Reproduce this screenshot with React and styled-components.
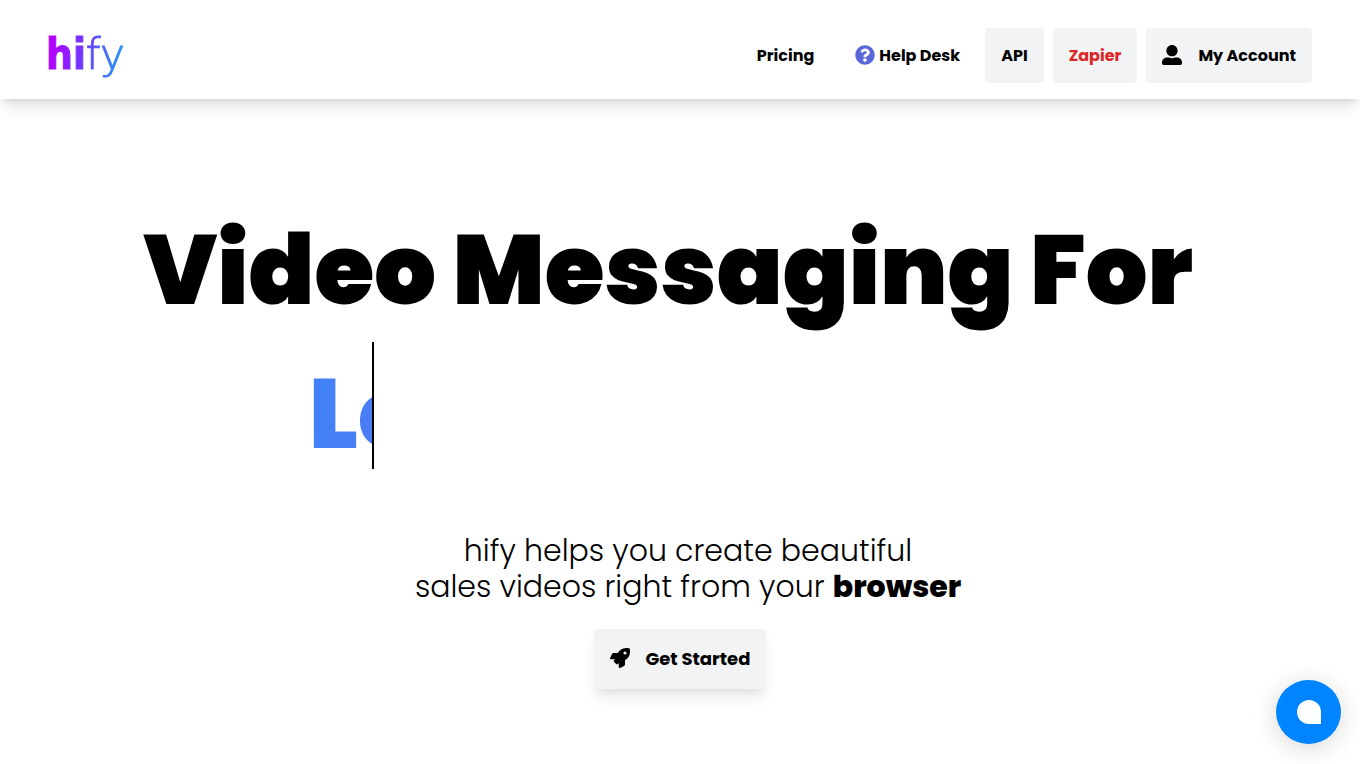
import React from "react";
import styled, { createGlobalStyle } from "styled-components";
import { FaQuestionCircle, FaUserAlt, FaRocket } from "react-icons/fa";

const GlobalStyle = createGlobalStyle`
  *, *::before, *::after { box-sizing: border-box; }
  body {
    margin: 0;
    background: #fff;
    color: #000;
    font-family: Poppins, Inter, "Liberation Sans", sans-serif;
  }
`;

const Header = styled.header`
  display: flex;
  align-items: center;
  justify-content: space-between;
  padding: 28px 48px 16px 46px;
  background: #fff;
  box-shadow: 0 10px 16px -3px rgba(0, 0, 0, 0.1), 0 4px 8px -2px rgba(0, 0, 0, 0.1);
`;

const Logo = styled.a`
  margin-bottom: 2px;
  font-family: "DejaVu Sans", sans-serif;
  font-size: 42px;
  line-height: 48px;
  font-weight: 200;
  text-decoration: none;
  color: transparent;
  -webkit-text-stroke: 1px transparent;
  background: linear-gradient(100deg, #b300ff 10%, #6a3cff 50%, #1e9bf0 95%);
  background-clip: text;
  -webkit-background-clip: text;

  b {
    font-family: "DejaVu Sans Condensed", "DejaVu Sans", sans-serif;
    font-weight: 700;
  }
`;

const Nav = styled.nav`
  display: flex;
  align-items: center;
  gap: 9px;
`;

const NavLink = styled.a`
  display: flex;
  align-items: center;
  gap: ${(p) => p.$gap || 4}px;
  padding: 16px;
  border-radius: 4px;
  font-size: 16px;
  line-height: 23px;
  font-weight: 700;
  text-decoration: none;
  white-space: nowrap;
  color: ${(p) => p.$color || "#000"};
  background: ${(p) => (p.$filled ? "#f2f3f5" : "transparent")};

  svg { margin-bottom: 2px; }
`;

const Hero = styled.main`
  display: flex;
  flex-direction: column;
  align-items: center;
  padding: 99px 48px 72px;
`;

const Title = styled.h1`
  display: flex;
  flex-direction: column;
  align-items: center;
  margin: 0;
  width: 100%;
  font-size: 97px;
  line-height: 144px;
  font-weight: 900;
  text-align: center;
`;

const TitleLine = styled.span`
  padding-right: 24px;
`;

const TypeSlot = styled.span`
  display: flex;
  width: 100%;
  max-width: 742px;
`;

const Typed = styled.span`
  display: block;
  width: 65px;
  height: 127px;
  overflow: hidden;
  white-space: nowrap;
  text-align: left;
  border-right: 2px solid #000;
  color: transparent;
  background: linear-gradient(100deg, #3f83f8, #4c7cf3);
  background-clip: text;
  -webkit-background-clip: text;
`;

const Lead = styled.p`
  margin: 64px 0 24px;
  padding-left: 16px;
  font-size: 30px;
  line-height: 36px;
  font-weight: 300;
  text-align: center;

  b { font-weight: 800; }
`;

const StartButton = styled.button`
  display: flex;
  align-items: center;
  gap: 16px;
  padding: 16px;
  border: 0;
  border-radius: 4px;
  font: inherit;
  font-size: 18px;
  line-height: 28px;
  font-weight: 700;
  color: #000;
  background: #f2f3f5;
  box-shadow: 0 10px 15px -3px rgba(0, 0, 0, 0.1), 0 4px 6px -2px rgba(0, 0, 0, 0.05);

  svg { margin-bottom: 2px; }
`;

const ChatButton = styled.button`
  position: fixed;
  right: 19px;
  bottom: 20px;
  display: grid;
  place-items: center;
  width: 65px;
  height: 64px;
  padding: 0;
  border: 0;
  border-radius: 50%;
  background: #0084ff;
  box-shadow: 0 4px 24px rgba(0, 0, 0, 0.16);
`;

export default function App() {
  return (
    <>
      <GlobalStyle />
      <Header>
        <Logo href="#"><b>hi</b>fy</Logo>
        <Nav>
          <NavLink href="#pricing">Pricing</NavLink>
          <NavLink href="#help">
            <FaQuestionCircle size={20} color="#5a67d8" aria-hidden="true" />
            Help Desk
          </NavLink>
          <NavLink href="#api" $filled>API</NavLink>
          <NavLink href="#zapier" $filled $color="#dc2626">Zapier</NavLink>
          <NavLink href="#account" $filled $gap={16}>
            <FaUserAlt size={20} aria-hidden="true" />
            My Account
          </NavLink>
        </Nav>
      </Header>
      <Hero>
        <Title>
          <TitleLine>Video Messaging For</TitleLine>
          <TypeSlot><Typed>Lo</Typed></TypeSlot>
        </Title>
        <Lead>
          hify helps you create beautiful
          <br />
          sales videos right from your <b>browser</b>
        </Lead>
        <StartButton type="button">
          <FaRocket size={20} aria-hidden="true" />
          Get Started
        </StartButton>
      </Hero>
      <ChatButton type="button" aria-label="Open chat">
        <svg width="24" height="24" viewBox="0 0 24 24" aria-hidden="true">
          <path d="M12 0a12 12 0 0 1 12 12v12H12A12 12 0 0 1 12 0z" fill="#fff" />
        </svg>
      </ChatButton>
    </>
  );
}
